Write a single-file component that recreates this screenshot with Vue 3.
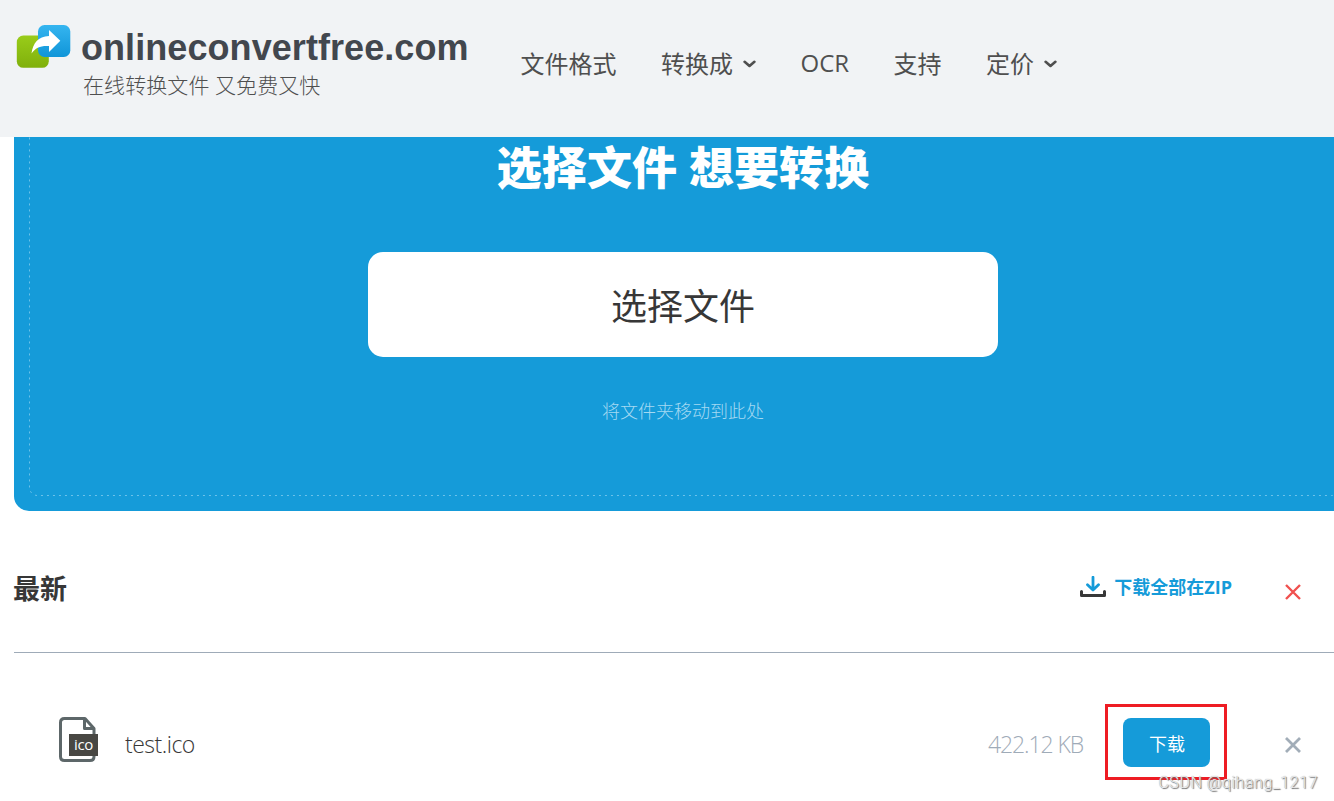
<template>
    <div class="page">
        <header class="header">
            <a class="brand">
                <svg class="brand-icon" width="56" height="46" viewBox="0 0 56 46">
                    <defs>
                        <linearGradient id="green" x1="0" y1="0" x2="0" y2="1">
                            <stop offset="0" stop-color="#99cc1a" />
                            <stop offset="1" stop-color="#80b00b" />
                        </linearGradient>
                        <linearGradient id="blue" x1="0" y1="0" x2="0" y2="1">
                            <stop offset="0" stop-color="#35b5f0" />
                            <stop offset="1" stop-color="#1095d8" />
                        </linearGradient>
                    </defs>
                    <rect x="0.8" y="11.5" width="32" height="32.3" rx="6.5" fill="url(#green)" />
                    <rect x="22" y="1" width="32.3" height="32" rx="6.5" fill="url(#blue)" />
                    <path d="M33 6 L44.3 16.8 L33 28 V22 C25 21.4 19.5 23.5 15.5 29.5 C17 19 22 12.3 33 12 Z" fill="#fff" />
                </svg>
                <div class="brand-text">
                    <div class="brand-name">onlineconvertfree.com</div>
                    <div class="brand-slogan">在线转换文件 又免费又快</div>
                </div>
            </a>
            <nav class="nav">
                <a v-for="item in menu" :key="item.title" class="nav-item">
                    <span>{{ item.title }}</span>
                    <svg v-if="item.dropdown" class="chevron" width="13" height="9" viewBox="0 0 13 9">
                        <path d="M1.6 1.8 L6.5 6 L11.4 1.8" fill="none" stroke="#4f4f4f" stroke-width="2.6" stroke-linecap="round" stroke-linejoin="round" />
                    </svg>
                </a>
            </nav>
        </header>

        <section class="upload">
            <svg class="upload-border" width="1312" height="500">
                <rect x="0.5" y="-20" width="1310" height="378.5" rx="8" />
            </svg>
            <h1>选择文件 想要转换</h1>
            <button class="choose">选择文件</button>
            <p class="hint">将文件夹移动到此处</p>
        </section>

        <section class="recent">
            <div class="recent-head">
                <h2>最新</h2>
                <a class="zip">
                    <svg width="26" height="22" viewBox="0 0 26 22">
                        <path d="M13 1.2 V13 M7.5 8.8 L13 14 L18.5 8.8" fill="none" stroke="#159bd9" stroke-width="2.8" stroke-linecap="round" stroke-linejoin="round" />
                        <path d="M1.5 15.5 V19.5 H24.5 V15.5" fill="none" stroke="#373737" stroke-width="3" stroke-linecap="round" stroke-linejoin="round" />
                    </svg>
                    <span>下载全部在ZIP</span>
                </a>
                <svg class="close close-all" width="16" height="16" viewBox="0 0 16 16">
                    <path d="M1 1 L15 15 M15 1 L1 15" />
                </svg>
            </div>

            <div v-for="file in files" :key="file.name" class="file">
                <div class="file-icon">
                    <svg width="38" height="46" viewBox="0 0 38 46">
                        <path d="M26 1.5 H5.5 Q1.5 1.5 1.5 5.5 V39.5 Q1.5 43.5 5.5 43.5 H31 Q35 43.5 35 39.5 V11.5 Z M25.5 2 V11.5 H34.5" fill="none" stroke="#5d6769" stroke-width="3" stroke-linejoin="round" />
                    </svg>
                    <span class="ext">{{ file.ext }}</span>
                </div>
                <div class="file-name">{{ file.name }}</div>
                <div class="file-size">{{ file.size }}</div>
                <div class="marked">
                    <button class="download">下载</button>
                </div>
                <svg class="close close-file" width="18" height="18" viewBox="0 0 18 18">
                    <path d="M2 2 L16 16 M16 2 L2 16" />
                </svg>
            </div>
        </section>

        <div class="watermark">CSDN @qihang_1217</div>
    </div>
</template>

<script setup>
import { ref } from 'vue'

const menu = [
    { title: '文件格式' },
    { title: '转换成', dropdown: true },
    { title: 'OCR' },
    { title: '支持' },
    { title: '定价', dropdown: true }
]

const files = ref([
    { name: 'test.ico', ext: 'ico', size: '422.12 KB' }
])
</script>

<style>
body {
    margin: 0;
    background: #fff;
}
</style>

<style scoped>
.page {
    position: relative;
    width: 1334px;
    height: 801px;
    overflow: hidden;
    font-family: "Open Sans", "Noto Sans CJK SC", sans-serif;
    color: #373737;
}

.header {
    display: flex;
    height: 137px;
    background: #f1f3f5;
}

.brand {
    display: flex;
    width: 520.5px;
    padding: 24px 0 0 16px;
    box-sizing: border-box;
}

.brand-icon {
    flex: none;
}

.brand-text {
    padding-left: 9px;
    white-space: nowrap;
}

.brand-name {
    padding-top: 1px;
    font: bold 36px/46px "Liberation Sans", sans-serif;
    letter-spacing: 0.07px;
    color: #42474e;
}

.brand-slogan {
    padding-left: 2px;
    font-size: 21px;
    line-height: 28px;
    font-weight: 300;
    letter-spacing: 0.08px;
    color: #4f4f4f;
}

.nav {
    display: flex;
    gap: 44.5px;
    height: 124px;
    align-items: center;
    font-size: 24px;
    color: #4f4f4f;
}

.nav-item {
    display: flex;
    align-items: center;
    white-space: nowrap;
}

.chevron {
    margin: 4px 0 0 10px;
}

.upload {
    position: relative;
    display: flex;
    flex-direction: column;
    align-items: center;
    width: 1338px;
    height: 374px;
    margin-left: 14px;
    background: #159bd9;
    border-radius: 0 0 0 15px;
    overflow: hidden;
}

.upload-border {
    position: absolute;
    left: 15px;
    top: 0;
}

.upload-border rect {
    fill: none;
    stroke: #6cc2ea;
    stroke-width: 1;
    stroke-dasharray: 2 4;
}

h1 {
    margin: 0;
    height: 115px;
    font-size: 45px;
    line-height: 62px;
    font-weight: 900;
    letter-spacing: 0.1px;
    color: #fff;
}

.choose {
    width: 630px;
    height: 105px;
    border: 0;
    border-radius: 15px;
    background: #fff;
    font-family: inherit;
    font-size: 36px;
    color: #373737;
}

.hint {
    margin: 41px 0 0;
    font-size: 18px;
    line-height: 26px;
    font-weight: 300;
    color: #a4d9f2;
}

.recent {
    margin-left: 14px;
}

.recent-head {
    display: flex;
    align-items: center;
    height: 141px;
    border-bottom: 1px solid #9fabb8;
    padding: 0 33px 0 0;
}

h2 {
    margin: 0 0 0 -1px;
    padding-top: 14px;
    flex: 1;
    font-size: 27px;
    line-height: 40px;
}

.zip {
    display: flex;
    align-items: center;
    gap: 8px;
    padding-top: 11px;
    font-size: 18px;
    font-weight: bold;
    color: #159bd9;
}

.zip span {
    padding: 0 1px 2px 0;
}

.close {
    flex: none;
    fill: none;
    stroke: #a2adb8;
    stroke-width: 2.8;
}

.close-all {
    margin: 20px 0 0 52px;
    stroke: #f0514f;
    stroke-width: 2.4;
}

.close-file {
    margin-top: 6px;
}

.file {
    display: flex;
    align-items: center;
    height: 178px;
    padding: 0 32px 0 45px;
}

.file-icon {
    position: relative;
    width: 38px;
    height: 46px;
    margin-bottom: 4px;
}

.ext {
    position: absolute;
    left: 10px;
    top: 17px;
    width: 29px;
    height: 22px;
    background: #484743;
    color: #fff;
    font-size: 15px;
    line-height: 21px;
    letter-spacing: -0.3px;
    text-align: center;
}

.file-name {
    flex: 1;
    padding: 4px 0 0 28px;
    font-size: 23px;
    font-weight: 300;
    letter-spacing: -0.5px;
    color: #373737;
}

.file-size {
    padding-top: 4px;
    font-size: 23px;
    font-weight: 300;
    letter-spacing: -1.1px;
    color: #9fabb8;
}

.marked {
    display: flex;
    align-items: center;
    justify-content: center;
    width: 122px;
    height: 76px;
    margin: 0 57px 0 22px;
    border: 3px solid #ee1c23;
    box-sizing: border-box;
}

.download {
    width: 87px;
    height: 49px;
    padding: 1px 0 0 2px;
    border: 0;
    border-radius: 8px;
    background: #159bd9;
    font-family: inherit;
    font-size: 18px;
    color: #fff;
}

.watermark {
    position: absolute;
    right: 16px;
    bottom: 6px;
    font: 300 16px/24px Roboto, "Liberation Sans", sans-serif;
    letter-spacing: 0.55px;
    color: #eee;
    text-shadow: 1px 1px 1px #666, 0 0 1px #999;
}
</style>
